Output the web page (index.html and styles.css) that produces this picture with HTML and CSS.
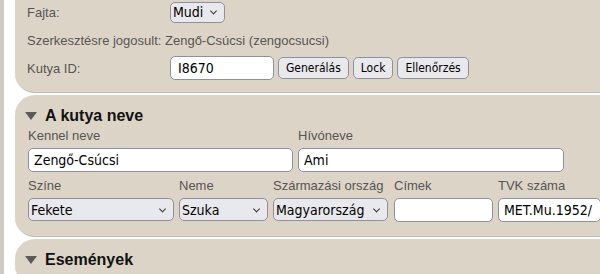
FILE: index.html
```html
<!DOCTYPE html>
<html lang="hu">
<head>
  <meta charset="UTF-8" />
  <title>Kutya adatlap</title>
  <link rel="stylesheet" href="styles.css">
</head>
<body>
  <div class="page">

    <!-- Alapadatok -->
    <div class="panel panel-top">
      <div class="row">
        <span class="row-label">Fajta:</span>
        <span class="select-wrap"><select class="ctl sel sel-breed"><option>Mudi</option></select></span>
      </div>
      <div class="row">
        <span class="row-text">Szerkesztésre jogosult: Zengő-Csúcsi (zengocsucsi)</span>
      </div>
      <div class="row">
        <span class="row-label">Kutya ID:</span>
        <input class="ctl inp inp-id" type="text" value="I8670">
        <button class="ctl btn">Generálás</button>
        <button class="ctl btn">Lock</button>
        <button class="ctl btn">Ellenőrzés</button>
      </div>
    </div>

    <!-- A kutya neve -->
    <div class="panel">
      <h2 class="panel-title"><span class="arrow"></span>A kutya neve</h2>
      <div class="fields">
        <label class="field f-kennel">
          <span class="field-label">Kennel neve</span>
          <input class="ctl inp" type="text" value="Zengő-Csúcsi">
        </label>
        <label class="field f-call">
          <span class="field-label">Hívóneve</span>
          <input class="ctl inp" type="text" value="Ami">
        </label>
      </div>
      <div class="fields">
        <label class="field f-color">
          <span class="field-label">Színe</span>
          <span class="select-wrap"><select class="ctl sel"><option>Fekete</option></select></span>
        </label>
        <label class="field f-sex">
          <span class="field-label">Neme</span>
          <span class="select-wrap"><select class="ctl sel"><option>Szuka</option></select></span>
        </label>
        <label class="field f-country">
          <span class="field-label">Származási ország</span>
          <span class="select-wrap"><select class="ctl sel"><option>Magyarország</option></select></span>
        </label>
        <label class="field f-titles">
          <span class="field-label">Címek</span>
          <input class="ctl inp" type="text" value="">
        </label>
        <label class="field f-tvk">
          <span class="field-label">TVK száma</span>
          <input class="ctl inp" type="text" value="MET.Mu.1952/">
        </label>
      </div>
    </div>

    <!-- Események -->
    <div class="panel">
      <h2 class="panel-title"><span class="arrow"></span>Események</h2>
    </div>

  </div>
</body>
</html>
```

FILE: styles.css
```css
body {
  margin: 0;
  background: #ffffff;
  font-family: 'Liberation Sans', Arial, sans-serif;
  font-size: 13px;
  color: #555;
  overflow: hidden;
  height: 274px;
}

.page {
  display: flow-root;
  border-left: 4px solid #d2cbc1;
  padding-left: 11px;
  height: 100%;
  box-sizing: border-box;
}

.panel {
  background: #ddd4c8;
  border-radius: 20px 0 0 20px;
  border-bottom: 1px solid #c4bcb1;
  margin-bottom: 2px;
  padding: 11px 0 14px 13px;
  overflow: hidden;
}

.panel-top {
  margin-top: -22px;
  padding: 20px 0 10px 12px;
}

.row {
  display: flex;
  align-items: center;
  gap: 4px;
  height: 28px;
}

.row-label {
  width: 139px;
  flex: none;
}

.panel-title {
  margin: 0;
  height: 20px;
  display: flex;
  align-items: center;
  font-size: 16px;
  font-weight: bold;
  color: #111;
  margin-left: -3px;
}

.arrow {
  width: 0;
  height: 0;
  border-left: 6px solid transparent;
  border-right: 6px solid transparent;
  border-top: 8px solid #5a5a5a;
  margin-right: 8px;
}

.fields {
  display: flex;
  gap: 5px;
  margin-top: 2px;
}

.fields + .fields {
  margin-top: 6px;
}

.field {
  display: flex;
  flex-direction: column;
  flex: none;
}

.field-label {
  line-height: 16px;
  margin-bottom: 4px;
}

.f-kennel { width: 265px; }
.f-call { width: 266px; }
.f-color { width: 146px; }
.f-sex { width: 89px; }
.f-country { width: 115px; }
.f-titles { width: 99px; margin-left: 1px; }
.f-tvk { width: 103px; }

.ctl {
  font-family: 'DejaVu Sans Condensed', 'DejaVu Sans', sans-serif;
  font-size: 14px;
  color: #000;
  box-sizing: border-box;
  border: 1px solid #8f8f9d;
  border-radius: 5px;
  margin: 0;
}

.inp {
  background: #fff;
  height: 24px;
  padding: 0 5px;
  width: 100%;
}

.inp-id {
  width: 104px;
  padding-left: 7px;
}

.btn {
  background: #e9e9ed;
  height: 22px;
  padding: 0 7px;
  font-size: 12px;
}

.select-wrap {
  position: relative;
  display: block;
}

.select-wrap::after {
  content: "";
  position: absolute;
  right: 9px;
  top: 50%;
  width: 4px;
  height: 4px;
  border-right: 1.5px solid #333;
  border-bottom: 1.5px solid #333;
  transform: translateY(-70%) rotate(45deg);
  pointer-events: none;
}

.sel {
  appearance: none;
  background: #e9e9ed;
  height: 23px;
  padding: 0 20px 0 2px;
  width: 100%;
}

.sel-breed {
  width: 55px;
  height: 21px;
}
```
